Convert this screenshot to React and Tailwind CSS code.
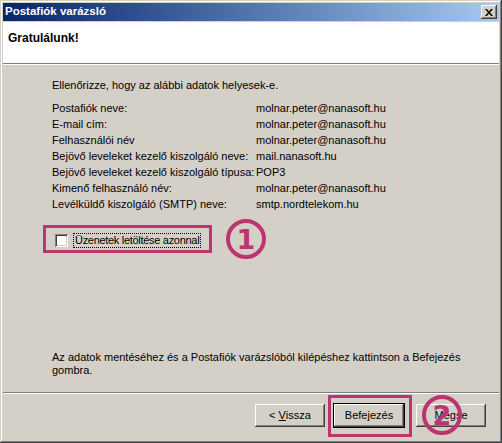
import React from 'react';

const rows = [
  ['Postafiók neve:', 'molnar.peter@nanasoft.hu'],
  ['E-mail cím:', 'molnar.peter@nanasoft.hu'],
  ['Felhasználói név', 'molnar.peter@nanasoft.hu'],
  ['Bejövő leveleket kezelő kiszolgáló neve:', 'mail.nanasoft.hu'],
  ['Bejövő leveleket kezelő kiszolgáló típusa:', 'POP3'],
  ['Kimenő felhasználó név:', 'molnar.peter@nanasoft.hu'],
  ['Levélküldő kiszolgáló (SMTP) neve:', 'smtp.nordtelekom.hu'],
];

const btn =
  'w-[70px] h-[23px] bg-[#d4d0c8] text-black text-[11px] flex items-center justify-center shadow-[inset_-1px_-1px_#404040,inset_1px_1px_#ffffff,inset_-2px_-2px_#808080,inset_2px_2px_#d4d0c8]';

export default function App() {
  return (
    <div className="relative w-[502px] h-[443px] bg-[#d4d0c8] p-[3px] flex flex-col font-['Tahoma','Liberation_Sans',sans-serif] text-[11px] text-black shadow-[inset_-1px_-1px_#404040,inset_1px_1px_#d4d0c8,inset_-2px_-2px_#808080,inset_2px_2px_#ffffff]">
      {/* title bar */}
      <div className="h-[18px] flex items-center justify-between pl-[2px] pr-[2px] bg-gradient-to-r from-[#0a246a] to-[#a6caf0]">
        <span className="text-white font-bold text-[11.5px] leading-none">Postafiók varázsló</span>
        <button className="w-[16px] h-[14px] bg-[#d4d0c8] flex items-center justify-center shadow-[inset_-1px_-1px_#404040,inset_1px_1px_#ffffff,inset_-2px_-2px_#808080]">
          <svg width="8" height="7" viewBox="0 0 8 7">
            <path d="M0 0h2l2 2.5L6 0h2L5 3.5 8 7H6L4 4.5 2 7H0l3-3.5z" fill="#000" />
          </svg>
        </button>
      </div>

      {/* header */}
      <div className="h-[42px] mt-px bg-white border-b border-[#808080] px-[5px] pt-[8px]">
        <div className="font-bold text-[12px] leading-[16px]">Gratulálunk!</div>
      </div>
      <div className="border-t border-white" />

      {/* body */}
      <div className="flex-1 flex flex-col pl-[49px] pt-[12px] pb-[15px]">
        <div className="leading-[16px]">Ellenőrizze, hogy az alábbi adatok helyesek-e.</div>
        <div className="mt-[7px]">
          {rows.map(([k, v]) => (
            <div key={k} className="flex leading-[16px]">
              <span className="w-[204px] shrink-0">{k}</span>
              <span>{v}</span>
            </div>
          ))}
        </div>
        <div className="mt-[20px] ml-[3px] flex items-center gap-[5px] h-[16px]">
          <span className="w-[13px] h-[13px] bg-white shadow-[inset_1px_1px_#808080,inset_-1px_-1px_#ffffff,inset_2px_2px_#404040,inset_-2px_-2px_#d4d0c8]" />
          <span className="border border-dotted border-black px-[1px] leading-[13px] tracking-[-0.3px]">Üzenetek letöltése azonnal</span>
        </div>
        <div className="mt-auto leading-[13px] pr-[20px]">
          Az adatok mentéséhez és a Postafiók varázslóból kilépéshez kattintson a Befejezés gombra.
        </div>
      </div>

      {/* footer */}
      <div className="border-t border-[#808080]" />
      <div className="border-t border-white" />
      <div className="h-[46px] flex items-start justify-end pt-[10px] pr-[13px]">
        <button className={btn}>
          &lt; <span className="underline ml-[3px]">V</span>issza
        </button>
        <button className={`${btn} ml-[9px] outline outline-1 outline-black`}>Befejezés</button>
        <button className={`${btn} ml-[12px] w-[68px]`}>Mégse</button>
      </div>

      {/* annotations */}
      <div className="absolute left-[43px] top-[225px] w-[169px] h-[28px] border-[3px] border-[#bc356e]" />
      <div className="absolute left-[226px] top-[219px] w-[40px] h-[40px] rounded-full border-[4px] border-[#bc356e] flex items-center justify-center">
        <span className="text-[#bc356e] font-bold text-[27px] leading-none font-['DejaVu_Sans',sans-serif]">1</span>
      </div>
      <div className="absolute left-[328px] top-[395px] w-[84px] h-[42px] border-[3px] border-[#bc356e]" />
      <div className="absolute left-[422px] top-[395px] w-[40px] h-[40px] rounded-full border-[4px] border-[#bc356e] flex items-center justify-center">
        <span className="text-[#bc356e] font-bold text-[27px] leading-none font-['DejaVu_Sans',sans-serif]">2</span>
      </div>
    </div>
  );
}
